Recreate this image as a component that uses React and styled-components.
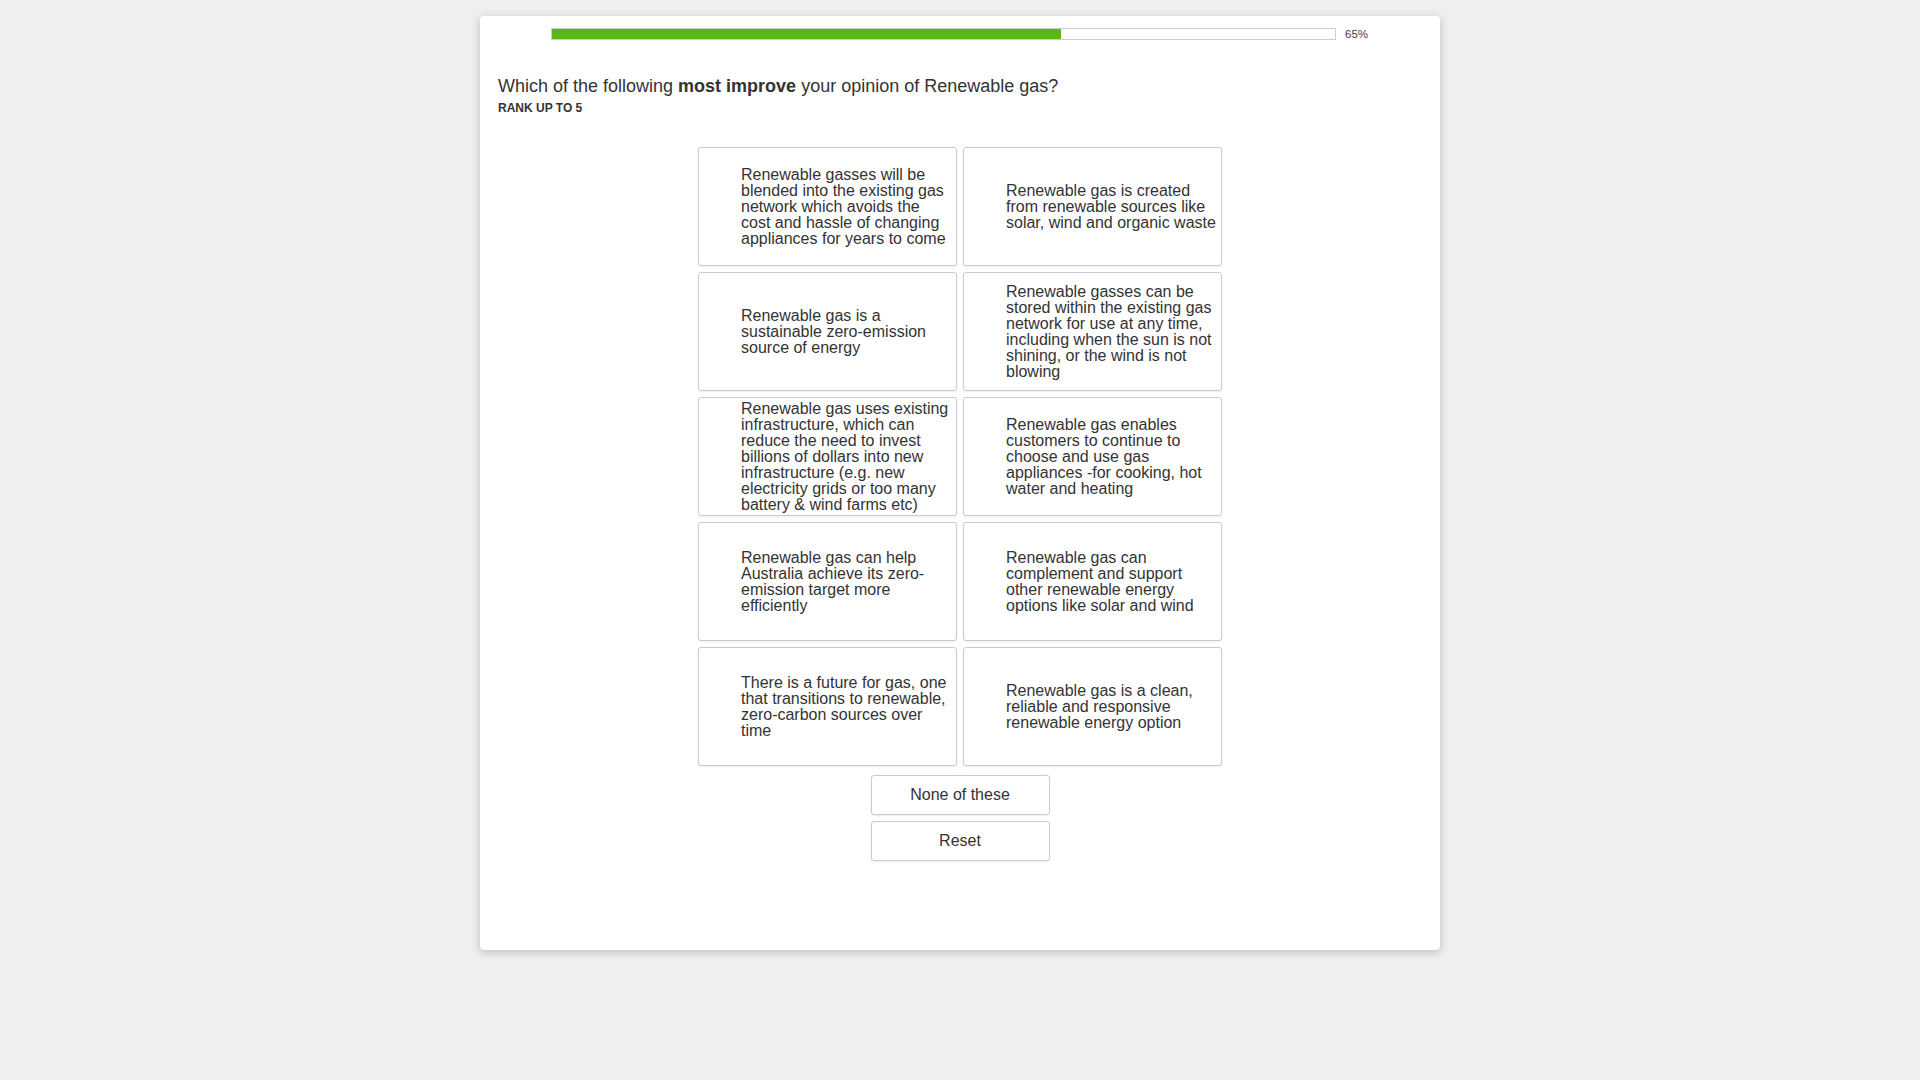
import styled, { createGlobalStyle } from "styled-components";

const GlobalStyle = createGlobalStyle`
  body {
    margin: 0;
    background: #efefef;
    font-family: "Liberation Sans", Arial, sans-serif;
    color: #333;
  }
`;

const Page = styled.div`
  padding-top: 16px;
  min-height: 1080px;
  box-sizing: border-box;
`;

const Card = styled.div`
  width: 960px;
  height: 934px;
  margin: 0 auto;
  background: #fff;
  border-radius: 4px;
  box-shadow: 0 2px 10px rgba(0, 0, 0, 0.22);
  padding-top: 12px;
  box-sizing: border-box;
`;

const ProgressRow = styled.div`
  display: flex;
  align-items: center;
  padding-left: 71px;
  height: 12px;
`;

const Track = styled.div`
  width: 785px;
  height: 12px;
  box-sizing: border-box;
  border: 1px solid #cccccc;
  background: #fff;
`;

const Fill = styled.div`
  height: 100%;
  background: #5cb615;
`;

const Percent = styled.span`
  margin-left: 9px;
  font-size: 11.5px;
  color: #444;
`;

const Question = styled.h2`
  margin: 35px 0 0 18px;
  font-size: 18px;
  font-weight: normal;
  line-height: 22px;
  color: #333;
`;

const Hint = styled.div`
  margin: 4px 0 0 18px;
  font-size: 12px;
  line-height: 14px;
  font-weight: bold;
  color: #333;
`;

const Grid = styled.div`
  display: grid;
  grid-template-columns: repeat(2, 259px);
  grid-auto-rows: 119px;
  gap: 6px;
  justify-content: center;
  margin-top: 32px;
`;

const Option = styled.div`
  display: flex;
  align-items: center;
  border: 1px solid #c6cbd7;
  border-radius: 3px;
  box-shadow: 0 1px 2px rgba(0, 0, 0, 0.08);
  padding: 0 4px 0 42px;
  font-size: 16px;
  line-height: 16px;
  color: #333;
  background: #fff;
  cursor: pointer;
`;

const Actions = styled.div`
  display: flex;
  flex-direction: column;
  align-items: center;
  gap: 6px;
  margin-top: 9px;
`;

const Button = styled.button`
  width: 179px;
  height: 40px;
  background: #fff;
  border: 1px solid #c6cbd7;
  border-radius: 3px;
  box-shadow: 0 1px 2px rgba(0, 0, 0, 0.08);
  font-family: "Liberation Sans", Arial, sans-serif;
  font-size: 16px;
  color: #333;
  cursor: pointer;
`;

const options = [
  "Renewable gasses will be blended into the existing gas network which avoids the cost and hassle of changing appliances for years to come",
  "Renewable gas is created from renewable sources like solar, wind and organic waste",
  "Renewable gas is a sustainable zero-emission source of energy",
  "Renewable gasses can be stored within the existing gas network for use at any time, including when the sun is not shining, or the wind is not blowing",
  "Renewable gas uses existing infrastructure, which can reduce the need to invest billions of dollars into new infrastructure (e.g. new electricity grids or too many battery & wind farms etc)",
  "Renewable gas enables customers to continue to choose and use gas appliances -for cooking, hot water and heating",
  "Renewable gas can help Australia achieve its zero-emission target more efficiently",
  "Renewable gas can complement and support other renewable energy options like solar and wind",
  "There is a future for gas, one that transitions to renewable, zero-carbon sources over time",
  "Renewable gas is a clean, reliable and responsive renewable energy option",
];

const App = () => {
  const progress = 65;
  return (
    <Page>
      <GlobalStyle />
      <Card>
        <ProgressRow>
          <Track>
            <Fill style={{ width: `${progress}%` }} />
          </Track>
          <Percent>{progress}%</Percent>
        </ProgressRow>
        <Question>
          Which of the following <b>most improve</b> your opinion of Renewable gas?
        </Question>
        <Hint>RANK UP TO 5</Hint>
        <Grid>
          {options.map((text) => (
            <Option key={text}>{text}</Option>
          ))}
        </Grid>
        <Actions>
          <Button>None of these</Button>
          <Button>Reset</Button>
        </Actions>
      </Card>
    </Page>
  );
};

export default App;
